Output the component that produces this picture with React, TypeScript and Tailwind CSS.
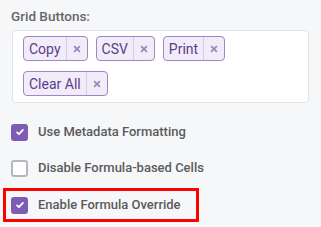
function Tag({ label }: { label: string }) {
  return (
    <div className="flex h-[25px] items-stretch rounded border border-[#9c87c7] bg-[#f1ecf8] text-[#5a3e8e]">
      <span className="flex items-center px-[5px] text-[14px] leading-none">{label}</span>
      <span className="flex w-[21px] items-center justify-center border-l border-[#d6cce6]">
        <svg viewBox="0 0 10 10" className="h-[8px] w-[8px]" stroke="#9a86c0" strokeWidth={2.2} strokeLinecap="round">
          <path d="M2 2l6 6M8 2l-6 6" />
        </svg>
      </span>
    </div>
  );
}

function Check({ checked, label }: { checked: boolean; label: string }) {
  return (
    <div className="flex h-5 items-center gap-[10px]">
      {checked ? (
        <span className="flex h-[17px] w-[17px] items-center justify-center rounded-[3px] bg-[#7d5db1]">
          <svg viewBox="0 0 12 12" className="h-[10px] w-[10px]" fill="none" stroke="#fff" strokeWidth={2.2} strokeLinecap="round" strokeLinejoin="round">
            <path d="M2.5 6.5l2.2 2L9.5 3.5" />
          </svg>
        </span>
      ) : (
        <span className="h-[17px] w-[17px] rounded-[3px] border-2 border-[#b4b8be] bg-white" />
      )}
      <span className="text-[13px] leading-5 font-medium text-[#5b5b5b]">{label}</span>
    </div>
  );
}

export default function App() {
  return (
    <div className="h-[227px] w-[321px] bg-[#f6f7f9] pl-[11px] pt-[6px] font-['Roboto',sans-serif]">
      <div className="text-[13.5px] leading-5 font-medium text-[#666]">Grid Buttons:</div>
      <div className="mt-[4px] ml-px w-[297px] rounded border border-[#e2e3e7] bg-white px-[10px] pt-[5px] pb-[6px]">
        <div className="flex flex-wrap gap-x-2 gap-y-[10px]">
          <Tag label="Copy" />
          <Tag label="CSV" />
          <Tag label="Print" />
          <Tag label="Clear All" />
        </div>
      </div>
      <div className="mt-[19px] flex flex-col gap-4">
        <Check checked label="Use Metadata Formatting" />
        <Check checked={false} label="Disable Formula-based Cells" />
      </div>
      <div className="-ml-2 mt-[10px] flex h-[34px] w-[196px] items-center border-[3px] border-[#ff0000] pl-[5px]">
        <Check checked label="Enable Formula Override" />
      </div>
    </div>
  );
}
